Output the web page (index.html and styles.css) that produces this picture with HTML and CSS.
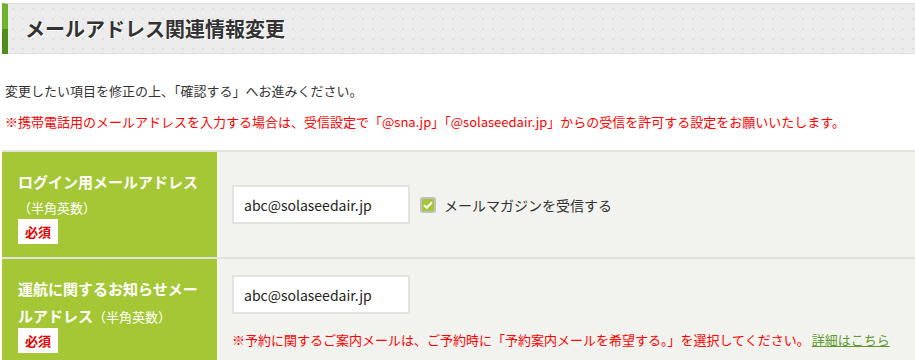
FILE: index.html
```html
<!DOCTYPE html>
<html>
    <head>
        <meta charset="utf-8" />
        <meta name="viewport" content="width=device-width, initial-scale=1" />
        <link rel="stylesheet" href="styles.css">
    </head>
    <body class="page">
        <div class="content">
            <h2 class="heading">メールアドレス関連情報変更</h2>

            <p class="lead">変更したい項目を修正の上、「確認する」へお進みください。</p>
            <p class="notice">※携帯電話用のメールアドレスを入力する場合は、受信設定で「@sna.jp」「@solaseedair.jp」からの受信を許可する設定をお願いいたします。</p>

            <div class="form-table">
                <div class="form-row">
                    <div class="label-cell">
                        <span class="label-main">ログイン用メールアドレス</span>
                        <span class="label-sub block">（半角英数）</span>
                        <span class="required">必須</span>
                    </div>
                    <div class="input-cell inline">
                        <input class="text-input" type="text" value="abc@solaseedair.jp" />
                        <label class="check">
                            <span class="check-box">
                                <svg width="10" height="8" viewBox="0 0 10 8"><path d="M1 4.2 L3.8 6.8 L9 1.2" fill="none" stroke="#fff" stroke-width="2"/></svg>
                            </span>
                            メールマガジンを受信する
                        </label>
                    </div>
                </div>
                <div class="form-row">
                    <div class="label-cell">
                        <span class="label-main">運航に関するお知らせメールアドレス</span><span class="label-sub">（半角英数）</span>
                        <span class="required">必須</span>
                    </div>
                    <div class="input-cell">
                        <input class="text-input" type="text" value="abc@solaseedair.jp" />
                        <p class="note">※予約に関するご案内メールは、ご予約時に「予約案内メールを希望する。」を選択してください。<a class="more" href="#">詳細はこちら</a></p>
                    </div>
                </div>
            </div>
        </div>
    </body>
</html>
```

FILE: styles.css
```css
* {
    padding: 0;
    margin: 0;
    box-sizing: border-box;
}

body.page {
    font-family: "Noto Sans CJK JP", "Noto Sans", sans-serif;
    color: #333;
    background: #fff;
    overflow: hidden;
}

div.content {
    padding: 3px 0 0 2px;
}

h2.heading {
    height: 51px;
    display: flex;
    align-items: center;
    padding-left: 17px;
    font-size: 20px;
    font-weight: bold;
    color: #333;
    text-shadow: 1px 1px 0 #fff;
    border-top: 1px solid #dedede;
    border-bottom: 1px solid #dedede;
    border-left: 6px solid #6db42c;
    background-color: #ececec;
    background-image: radial-gradient(circle, #dedede 1px, transparent 1.3px);
    background-size: 10px 10px;
    position: relative;
}
h2.heading::before {
    content: "";
    position: absolute;
    left: -6px;
    top: 50%;
    bottom: -1px;
    width: 6px;
    background: #4f8e1d;
}

p.lead {
    margin-top: 26px;
    padding-left: 3px;
    font-size: 13px;
    line-height: 22px;
}

p.notice {
    margin-top: 9px;
    padding-left: 3px;
    font-size: 13px;
    line-height: 22px;
    color: #f00;
}

div.form-table {
    margin-top: 17px;
    border-top: 2px solid #e3e3e0;
}

div.form-row {
    display: flex;
    border-bottom: 2px solid #e3e3e0;
}

div.label-cell {
    width: 217px;
    flex-shrink: 0;
    background: #a5c735;
    color: #fff;
    line-height: 26px;
    padding: 16px 14px 13px 16px;
    border-right: 2px solid #f7f7f3;
}
span.label-main {
    font-size: 15px;
    font-weight: bold;
}
span.label-sub {
    font-size: 13px;
}
span.block {
    display: block;
}
span.required {
    display: table;
    margin-top: -2px;
    background: #fff;
    color: #e60000;
    font-size: 13px;
    font-weight: bold;
    line-height: 25px;
    padding: 0 7px;
}

div.input-cell {
    flex-grow: 1;
    background: #f2f2ee;
    padding: 16px 13px 0 13px;
}
div.input-cell.inline {
    display: flex;
    align-items: center;
    padding-top: 0;
}

input.text-input {
    width: 178px;
    height: 39px;
    border: 2px solid #e2e2de;
    background: #fff;
    padding: 0 10px;
    font-family: "Noto Sans CJK JP", "Noto Sans", sans-serif;
    font-size: 14px;
    color: #222;
    outline: none;
}

label.check {
    display: flex;
    align-items: center;
    margin-left: 10px;
    font-size: 14px;
    color: #333;
}
span.check-box {
    width: 16px;
    height: 16px;
    margin-right: 8px;
    border: 2px solid #c0c0bc;
    border-radius: 3px;
    background: #a5c735;
    display: flex;
    align-items: center;
    justify-content: center;
}

p.note {
    margin-top: 15px;
    font-size: 13px;
    line-height: 22px;
    color: #f00;
    white-space: nowrap;
}
a.more {
    color: #5f9a2c;
    text-decoration: underline;
    margin-left: 2px;
}
```
